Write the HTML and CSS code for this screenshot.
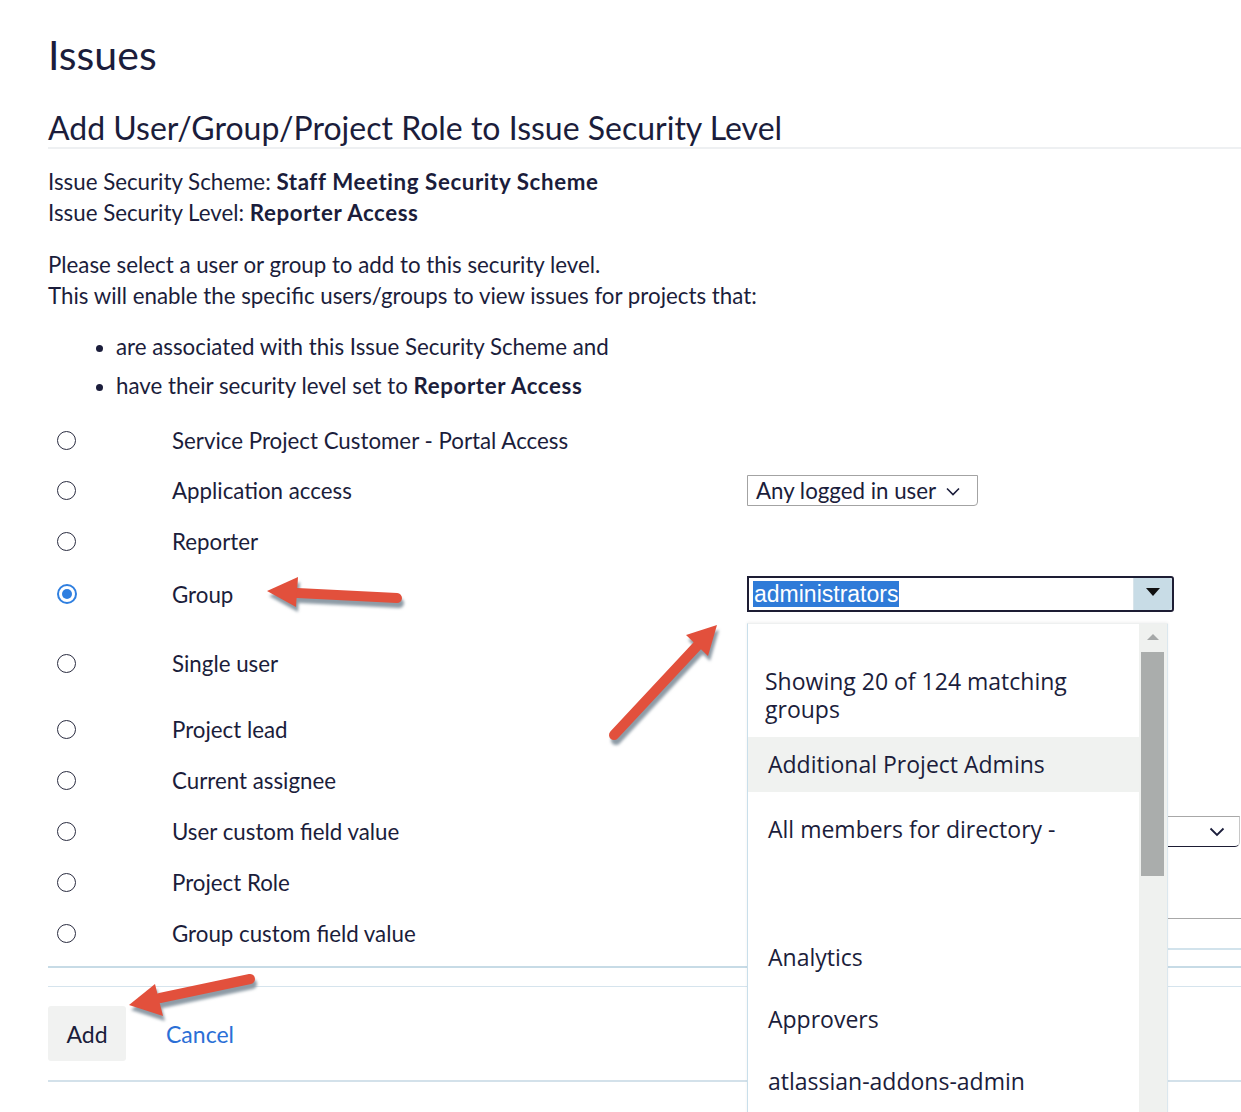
FILE: index.html
```html
<!DOCTYPE html>
<html lang="en">
<head>
<meta charset="utf-8">
<title>Issues</title>
<link rel="stylesheet" href="styles.css">
</head>
<body>
<div class="page">
  <h1 class="title">Issues</h1>
  <h2 class="subtitle">Add User/Group/Project Role to Issue Security Level</h2>
  <div class="meta">
    <div>Issue Security Scheme: <b>Staff Meeting Security Scheme</b></div>
    <div>Issue Security Level: <b>Reporter Access</b></div>
  </div>
  <div class="intro">
    <div>Please select a user or group to add to this security level.</div>
    <div>This will enable the specific users/groups to view issues for projects that:</div>
  </div>
  <ul class="conds">
    <li>are associated with this Issue Security Scheme and</li>
    <li>have their security level set to <b>Reporter Access</b></li>
  </ul>

  <div class="choices">
    <div class="row short">
      <span class="rcell"><span class="radio"></span></span>
      <span class="lbl">Service Project Customer - Portal Access</span>
      <span class="ctl"></span>
    </div>
    <div class="row">
      <span class="rcell"><span class="radio"></span></span>
      <span class="lbl">Application access</span>
      <span class="ctl">
        <span class="sel-app">Any logged in user
          <svg class="chev" width="14" height="9" viewBox="0 0 14 9"><path d="M1 1.5 L7 7.5 L13 1.5" fill="none" stroke="#1b1d3b" stroke-width="1.6"/></svg>
        </span>
      </span>
    </div>
    <div class="row short">
      <span class="rcell"><span class="radio"></span></span>
      <span class="lbl">Reporter</span>
      <span class="ctl"></span>
    </div>
    <div class="row group">
      <span class="rcell"><span class="radio on"></span></span>
      <span class="lbl">Group</span>
      <span class="ctl">
        <span class="combo">
          <span class="combo-val">administrators</span>
          <span class="combo-btn"><span class="tri"></span></span>
          <div class="suggest">
            <div class="sg-list">
              <div class="sg-head">Showing 20 of 124 matching groups</div>
              <div class="sg-item hl">Additional Project Admins</div>
              <div class="sg-item tall">All members for directory -</div>
              <div class="sg-item">Analytics</div>
              <div class="sg-item">Approvers</div>
              <div class="sg-item">atlassian-addons-admin</div>
            </div>
            <div class="sg-scroll">
              <span class="up"></span>
              <span class="thumb"></span>
            </div>
          </div>
        </span>
      </span>
    </div>
    <div class="row single">
      <span class="rcell"><span class="radio"></span></span>
      <span class="lbl">Single user</span>
      <span class="ctl"></span>
    </div>
    <div class="row">
      <span class="rcell"><span class="radio"></span></span>
      <span class="lbl">Project lead</span>
      <span class="ctl"></span>
    </div>
    <div class="row">
      <span class="rcell"><span class="radio"></span></span>
      <span class="lbl">Current assignee</span>
      <span class="ctl"></span>
    </div>
    <div class="row">
      <span class="rcell"><span class="radio"></span></span>
      <span class="lbl">User custom field value</span>
      <span class="ctl">
        <span class="sel-cf">
          <svg class="chev" width="16" height="10" viewBox="0 0 16 10"><path d="M1.5 1.5 L8 8 L14.5 1.5" fill="none" stroke="#1b1d3b" stroke-width="1.8"/></svg>
        </span>
      </span>
    </div>
    <div class="row">
      <span class="rcell"><span class="radio"></span></span>
      <span class="lbl">Project Role</span>
      <span class="ctl"></span>
    </div>
    <div class="row">
      <span class="rcell"><span class="radio"></span></span>
      <span class="lbl">Group custom field value</span>
      <span class="ctl"><span class="inp-cf"></span></span>
    </div>
  </div>

  <div class="rule-a"></div>
  <div class="rule-b"></div>
  <div class="buttons">
    <button class="add" type="button">Add</button>
    <a class="cancel" href="#">Cancel</a>
  </div>
  <div class="rule-c"></div>
</div>

<svg class="annot" width="1241" height="1112" viewBox="0 0 1241 1112">
  <defs>
    <filter id="blur" x="-10%" y="-10%" width="120%" height="120%">
      <feGaussianBlur stdDeviation="1.6"/>
    </filter>
  </defs>
  <g class="shadow" transform="translate(2 5)" filter="url(#blur)">
    <line x1="297" y1="593" x2="397" y2="598" stroke="#8e9ba6" stroke-width="10" stroke-linecap="round"/>
    <polygon points="267,591 298,577 296,607" fill="#8e9ba6"/>
    <line x1="698" y1="645" x2="614" y2="735" stroke="#8e9ba6" stroke-width="10" stroke-linecap="round"/>
    <polygon points="717,625 686,635 708,656" fill="#8e9ba6"/>
    <line x1="160" y1="998" x2="250" y2="979" stroke="#8e9ba6" stroke-width="10" stroke-linecap="round"/>
    <polygon points="129,1005 155,984 163,1016" fill="#8e9ba6"/>
  </g>
  <g class="arrows">
    <line x1="297" y1="593" x2="397" y2="598" stroke="#e2503c" stroke-width="10" stroke-linecap="round"/>
    <polygon points="267,591 298,577 296,607" fill="#e2503c"/>
    <line x1="698" y1="645" x2="614" y2="735" stroke="#e2503c" stroke-width="10" stroke-linecap="round"/>
    <polygon points="717,625 686,635 708,656" fill="#e2503c"/>
    <line x1="160" y1="998" x2="250" y2="979" stroke="#e2503c" stroke-width="10" stroke-linecap="round"/>
    <polygon points="129,1005 155,984 163,1016" fill="#e2503c"/>
  </g>
</svg>
</body>
</html>
```

FILE: styles.css
```css
html, body {
  margin: 0;
  padding: 0;
  overflow: hidden;
  background: #ffffff;
}

body {
  font-family: Lato, "Noto Sans", sans-serif;
  color: #1b1d3b;
  font-size: 22.3px;
  position: relative;
  width: 1241px;
  height: 1112px;
}

.page {
  padding: 30px 0 0 48px;
}

.title {
  margin: 0;
  font-size: 41px;
  line-height: 50px;
  font-weight: 400;
}

.subtitle {
  margin: 29px 0 0;
  font-size: 32px;
  line-height: 38px;
  font-weight: 400;
  border-bottom: 2px solid #eef0f2;
}

.meta {
  margin-top: 17px;
  line-height: 31px;
}

.intro {
  margin-top: 21px;
  line-height: 31px;
}

.meta b, .conds b {
  font-weight: 700;
  letter-spacing: 0.6px;
}

.conds {
  margin: 16px 0 0;
  padding: 0 0 0 68px;
  line-height: 39px;
}

.conds li::marker {
  font-size: 20px;
}

.choices {
  margin-top: 10px;
  display: flex;
  flex-direction: column;
}

.row {
  display: grid;
  grid-template-columns: 124px 575px 1fr;
  align-items: center;
  height: 51px;
}

.row.short { height: 50px; }
.row.group { height: 56px; }
.row.single { height: 82px; }

.rcell {
  display: flex;
  align-items: center;
  padding-left: 9px;
}

.radio {
  width: 17px;
  height: 17px;
  border: 1.6px solid #2a2c40;
  border-radius: 50%;
  box-sizing: content-box;
  display: inline-block;
  position: relative;
}

.radio.on {
  border: 2px solid #2f7fe0;
  width: 16px;
  height: 16px;
}

.radio.on::after {
  content: "";
  position: absolute;
  left: 3px;
  top: 3px;
  width: 10px;
  height: 10px;
  border-radius: 50%;
  background: #2f7fe0;
}

.lbl {
  white-space: nowrap;
}

.ctl {
  position: relative;
  display: flex;
  align-items: center;
  height: 100%;
}

.sel-app {
  display: inline-flex;
  align-items: center;
  gap: 10px;
  height: 29px;
  padding: 0 17px 0 8px;
  border: 1px solid #a3a3a3;
  border-radius: 0 0 4px 0;
  line-height: 29px;
  box-sizing: content-box;
}

.sel-app .chev {
  margin-top: 2px;
}

.combo {
  position: relative;
  display: flex;
  align-items: center;
  width: 423px;
  height: 32px;
  border: 2px solid #1d1d34;
  border-radius: 0 3px 3px 0;
}

.combo-val {
  margin-left: 4px;
  font-family: "Liberation Sans", Arial, sans-serif;
  font-size: 23px;
  line-height: 26px;
  background: #2f7bd8;
  color: #ffffff;
  padding: 0 1px;
}

.combo-btn {
  margin-left: auto;
  width: 38px;
  height: 32px;
  background: #c8dce6;
  border-radius: 0 3px 3px 0;
  border-left: 1px solid #d8e4ea;
  display: flex;
  align-items: center;
  justify-content: center;
}

.tri {
  width: 0;
  height: 0;
  border-left: 7px solid transparent;
  border-right: 7px solid transparent;
  border-top: 8px solid #111;
  margin-bottom: 4px;
}

.suggest {
  position: absolute;
  left: -2px;
  top: 45px;
  width: 420px;
  height: 500px;
  background: #ffffff;
  border-left: 1px solid #c9dfeb;
  border-top: 1px solid #eef0f0;
  box-shadow: 0 -1px 3px rgba(0, 0, 0, 0.06);
  display: flex;
  z-index: 5;
}

.sg-list {
  flex: 1;
  font-family: "Open Sans", "Noto Sans", sans-serif;
  font-size: 23px;
  color: #1b1d3b;
}

.sg-head {
  padding: 43px 40px 0 17px;
  line-height: 28px;
  margin-bottom: 14px;
}

.sg-item {
  padding: 0 0 0 20px;
  height: 62px;
  line-height: 62px;
  white-space: nowrap;
}

.sg-item.hl {
  background: #f0f2f0;
  height: 55px;
  line-height: 55px;
  margin-bottom: 4px;
}

.sg-item.tall {
  height: 130px;
  line-height: 66px;
}

.sg-scroll {
  width: 28px;
  background: #eff1ef;
  border-right: 1px solid #dbe7ee;
  position: relative;
}

.sg-scroll .up {
  position: absolute;
  left: 8px;
  top: 10px;
  width: 0;
  height: 0;
  border-left: 6px solid transparent;
  border-right: 6px solid transparent;
  border-bottom: 6px solid #a5a8a8;
}

.sg-scroll .thumb {
  position: absolute;
  left: 2px;
  top: 28px;
  width: 23px;
  height: 224px;
  background: #aaadac;
}

.sel-cf {
  display: flex;
  align-items: center;
  justify-content: flex-end;
  width: 478px;
  height: 29px;
  padding-right: 14px;
  border-top: 1px solid #a8a8a8;
  border-bottom: 1px solid #1d1d34;
  border-right: 1px solid #c8c8c8;
  border-radius: 0 0 5px 0;
}

.inp-cf {
  display: block;
  width: 100%;
  height: 29px;
  border-top: 1px solid #a8a8a8;
  border-bottom: 2px solid #d2e3ec;
}

.rule-a {
  margin-top: 7px;
  height: 2px;
  background: #c7dbe6;
}

.rule-b {
  margin-top: 18px;
  height: 1px;
  background: #d6e4ed;
}

.buttons {
  margin-top: 19px;
  display: flex;
  align-items: center;
  gap: 40px;
}

.add {
  width: 78px;
  height: 55px;
  border: none;
  border-radius: 3px;
  background: #f1f2f1;
  font-family: Lato, "Noto Sans", sans-serif;
  font-size: 23px;
  color: #1b1d3b;
  padding: 0;
}

.cancel {
  color: #2b6fd6;
  text-decoration: none;
  font-size: 23px;
}

.rule-c {
  margin-top: 19px;
  height: 2px;
  background: #d3e1ea;
}

.annot {
  position: absolute;
  left: 0;
  top: 0;
  z-index: 10;
  pointer-events: none;
}
```
